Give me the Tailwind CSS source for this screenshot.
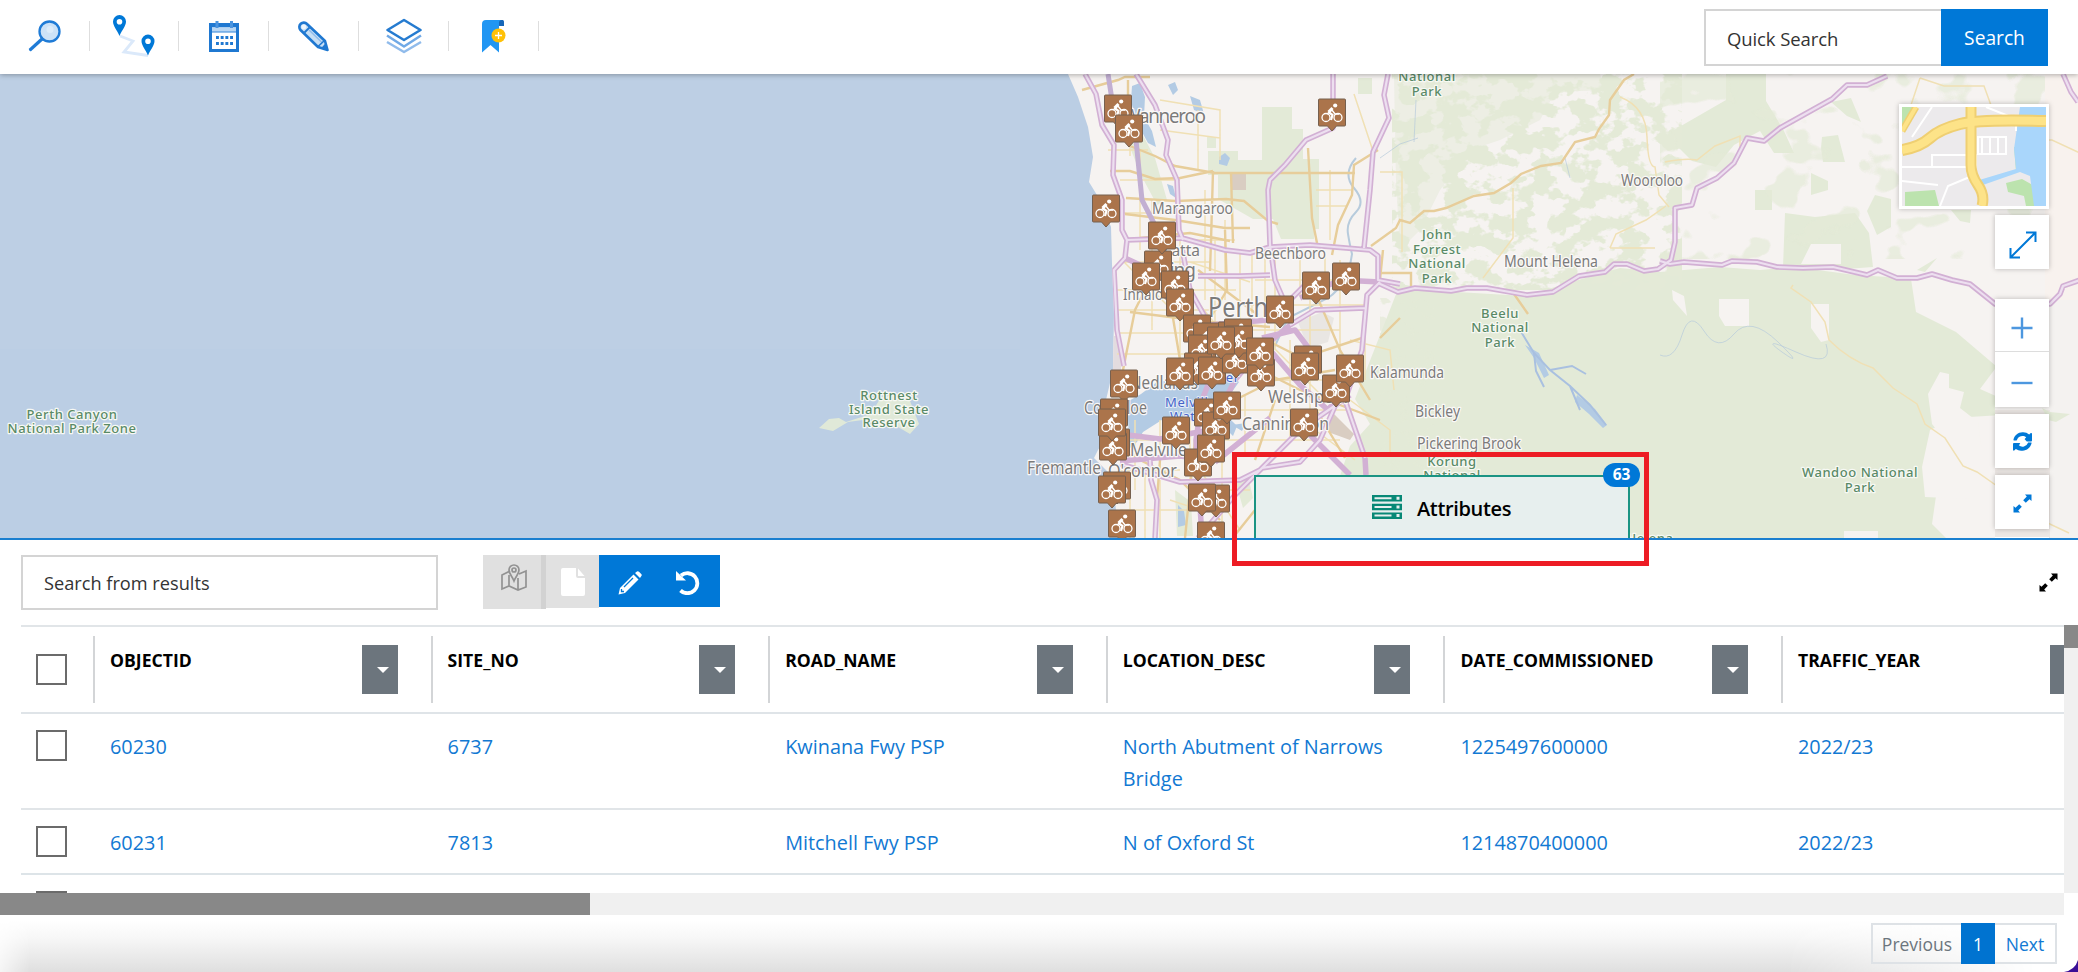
<!DOCTYPE html>
<html lang="en">
<head>
<meta charset="utf-8">
<title>Traffic Map</title>
<script src="https://cdn.jsdelivr.net/npm/@tailwindcss/browser@4"></script>
</head>
<body class="w-[2078px] h-[972px] overflow-hidden bg-white font-['Open_Sans','Noto_Sans',sans-serif] text-[#333] relative flex flex-col">

<header class="relative z-10 h-[74px] shrink-0 bg-white flex justify-between shadow-[0_1px_5px_rgba(0,0,0,0.3)]">
  <nav class="flex items-start pt-[21px]">
    <div class="w-[90px] h-[30px] border-r border-[#dedede] flex justify-center items-center">
      <svg class="w-8 h-8 overflow-visible" viewBox="0 0 32 32"><circle cx="20.500" cy="11.500" r="10" fill="#cce2f7" stroke="#1f7bd6" stroke-width="2.300"/><circle cx="21" cy="9.500" r="3.500" fill="#dcecfa"/><path d="M13 19 1.500 29.500" stroke="#1f7bd6" stroke-width="3.200" stroke-linecap="round"/></svg>
    </div>
    <div class="w-[89px] h-[30px] border-r border-[#dedede] flex justify-center items-center">
      <svg class="w-[42px] h-[42px] overflow-visible" viewBox="0 0 42 42"><path d="M7 21 20 26 11 37 35 40.500" fill="none" stroke="#dbe9fa" stroke-width="2.800"/><path id="pin" d="M6.500 0a6.500 6.500 0 0 1 6.500 6.500C13 11 9 15 6.500 21 4 15 0 11 0 6.500A6.500 6.500 0 0 1 6.500 0Zm0 4a2.800 2.800 0 1 0 0 5.600 2.800 2.800 0 0 0 0-5.600Z" fill="#0078d7"/><use href="#pin" x="28.500" y="19.500"/></svg>
    </div>
    <div class="w-[90px] h-[30px] border-r border-[#dedede] flex justify-center items-center">
      <svg class="w-[30px] h-[32px] overflow-visible" viewBox="0 0 30 32"><rect x="1.500" y="4.500" width="27" height="26" fill="#fff" stroke="#1f78d1" stroke-width="3"/><path d="M3 7h24v5H3z" fill="#b8d6f3"/><path d="M3 12h24" stroke="#4c95df" stroke-width="1.200"/><path d="M3 6h24" stroke="#1f78d1" stroke-width="2.200"/><path d="M8 1v7M22.500 1v7" stroke="#4a94df" stroke-width="3"/><path d="M7 17.500h17M7 23.500h17" stroke="#1f78d1" stroke-width="3.200" stroke-dasharray="2.900 1.800"/></svg>
    </div>
    <div class="w-[90px] h-[30px] border-r border-[#dedede] flex justify-center items-center">
      <svg class="w-[31px] h-[30px] overflow-visible" viewBox="0 0 31 30"><path d="M9 3 27 20 29.500 29 20 26 2.500 9A4.300 4.300 0 0 1 9 3Z" fill="#c7dff5" stroke="#1f78d1" stroke-width="2.600" stroke-linejoin="round"/><path d="m6.500 11.500 5-5" stroke="#1f78d1" stroke-width="1.800"/><circle cx="5.800" cy="6" r="2.400" fill="#eef6fd"/><path d="m11 9 13 12.500" stroke="#8fbcec" stroke-width="1.500"/><path d="M27.300 22.500 30 29.500l-7-2.300z" fill="#1f78d1"/><path d="m20 25.500 6.500-6" stroke="#1f78d1" stroke-width="1.600"/></svg>
    </div>
    <div class="w-[90px] h-[30px] border-r border-[#dedede] flex justify-center items-center">
      <svg class="w-[36px] h-[34px] overflow-visible" viewBox="0 0 36 34" fill="none" stroke-width="2.500" stroke-linejoin="round"><path d="M1 23 18 33 35 23" stroke="#90bbeb"/><path d="M1 16.500 18 27.500 35 16.500" stroke="#70a9e6"/><path d="M18 1 34.500 11 18 21 1.500 11Z" fill="#fff" stroke="#257bd0" stroke-width="2.600"/></svg>
    </div>
    <div class="w-[90px] h-[30px] border-r border-[#dedede] flex justify-center items-center">
      <svg class="w-[24px] h-[33px] overflow-visible" viewBox="0 0 24 33"><path d="M17 0h4a2.500 2.500 0 0 1 1 2.500V6h-5z" fill="#1666b8"/><path d="M0 32.500V4a4 4 0 0 1 4-4h16a3 3 0 0 0-3 3v29.500L8.500 25Z" fill="#2196f3"/><circle cx="16.500" cy="15.500" r="7" fill="#ffc107"/><path d="M16.500 12v7M13 15.500h7" stroke="#fff" stroke-width="1.300"/></svg>
    </div>
  </nav>
  <div class="flex mt-[9px] mr-[30px] h-[57px]">
    <div class="w-[237px] border-2 border-r-0 border-[#d4d4d4] flex items-center pl-[21px] pt-[2px] text-[18.500px] tracking-[-0.100px]">Quick Search</div>
    <div class="w-[107px] bg-[#0078d7] text-white flex items-center justify-center text-[19.200px] pt-[2px]">Search</div>
  </div>
</header>

<section class="relative h-[464px] shrink-0 overflow-hidden bg-[#bdcfe4]">
  <svg class="block w-[2078px] h-[464px]" viewBox="0 74 2078 464">
    <defs>
      <filter id="bush" x="0" y="0" width="1" height="1" color-interpolation-filters="sRGB"><feTurbulence type="fractalNoise" baseFrequency="0.045 0.060" numOctaves="4" seed="8"/><feColorMatrix values="0 0 0 0 0.894  0 0 0 0 0.918  0 0 0 0 0.843  14 0 0 0 -6.500"/></filter>
      <filter id="bush2" x="0" y="0" width="1" height="1" color-interpolation-filters="sRGB"><feTurbulence type="fractalNoise" baseFrequency="0.022 0.028" numOctaves="3" seed="21"/><feColorMatrix values="0 0 0 0 0.894  0 0 0 0 0.918  0 0 0 0 0.843  18 0 0 0 -10.500"/></filter>
      <clipPath id="land"><path d="M1068 74 1078 97 1088 127 1093 157 1089 182 1100 200 1111 227 1112 264 1114 314 1113 370 1106 400 1104 440 1098 450 1094 458 1102 466 1112 476 1116 510 1118 538H2078V74Z"/></clipPath>
      <g id="bike">
        <path d="M-12.500 0h25q1 0 1 1v25q0 1-1 1H4.500L0 32-4.500 27h-8q-1 0-1-1V1q0-1 1-1Z" fill="#ab744b" stroke="#76604f" stroke-width="1"/>
        <g fill="none" stroke="#fff" stroke-width="1.300"><circle cx="-6" cy="18.500" r="4"/><circle cx="6" cy="18.500" r="4"/><path d="m-5 15 5-4 3 4h4" stroke-width="1.500"/><path d="m-3.500 13 4 3-1.500 5" stroke-width="2.200"/><path d="m-3.500 13 4-4" stroke-width="3"/></g><circle cx="3.200" cy="6.500" r="2.100" fill="#fff"/>
      </g>
    </defs>
    <path d="M0 349h1113v189H0zM1020 74h93v276h-93z" fill="#b9cde3" opacity=".25"/>
    <path d="m819 428 10-9 10-1 7 4 25-8 10-17 22-4 7 8 9 23-9 10-12-7-28-8-22 3-15 9Z" fill="#e0e9d8"/>
    <g clip-path="url(#land)">
      <path d="M1060 74h1018v464H1060z" fill="#f6f3f1"/>
      <path d="M2045 74h33v274h-33z" fill="#f8f2ee"/>
      <g fill="#e3ead7">
        <path d="M1262 107h30v22h11v30h16v70h-5v10h-33l-8-20h-20l-35-20v-24h-10v-24h30v9h24zM1358 78h14v16h-14zM1207 137h9v11h-9zM1127 110l12 18 16 30 12 42-10 5-16-30-16-40z"/>
        <path d="M1394 74 1600 74 1605 90 1555 92 1540 120 1500 140 1470 150 1440 190 1420 230 1400 250 1396 180Z" opacity=".5"/>
        <path d="m1400 284 40 7 85 5 60-18 35-10 40 4 60-5 40 3 35-3 60 8 50 3 30 12 25 14 7 19 18 24 13 18-18 24 18 8 4 18-33 2-20 15 4 25-15 25-6 42 14 14 40 3 100 10v63h-760l8-70 16-32-10-36 10-30 20-22-15-25Z"/>
        <path d="m1674 130 52-30 0-26 40 0v27l18 30 10 22-20 0-14-22-26 14-18 22-24-6-16-16ZM1831 102l20-4 10 24-14-6zM1822 137l16-2 7 27h-22l-2-14zM1811 173l17 8v9l-17 5zM1755 190h17v20h-17zM1785 213l30 4 40-4 14 20 4 34-40 3-50-2zM1875 195l16 4 0 28-14 8-10-24zM1951 210h20l-1 13-10-2zM1917 270l20-12-12 14z"/>
        <path d="m1235 480 14 0 4 18-10 10zM1175 490l16 12 2 34h-16z"/>
      </g>
      <rect x="1392" y="74" width="290" height="216" filter="url(#bush)"/>
      <rect x="1660" y="74" width="385" height="185" filter="url(#bush2)" opacity=".7"/>
      <rect x="1380" y="298" width="55" height="240" filter="url(#bush)" opacity=".7"/>
      <g fill="#f6f3f1">
        <path d="M1719 299h30v27h-24l-6-10zM1811 304h18v36l-8 2-10-14zM1672 290l12 6 3 20-14-16zM1910 272l26 8 36 10 24 16v60l-40-34-40-20zM1940 372l9 2 0 14 15 4-4 16 18 14 4 30-10 22-40-50-4-30zM1930 430l20-10 45 40v36h-20l-5 3-45-2-3-30zM1844 531h34v7h-34zM1811 244h30v20h-40z"/>
      </g>
      <path d="M1995 300h83v238h-83z" fill="#f4f2f0"/>
      <path d="M1995 410h55v128h-55z" fill="#ece7e4"/>
      <path d="m2042 408 8 4 20 2-14 8-8-2z" fill="#e3ead7"/>
      <path d="M1110 336h11v34h-10z" fill="#e3dcdf"/>
      <path d="m1330 410 24 24-4 6-22-8zM1232 173h14v17h-14z" fill="#d9cdc2"/>
      <path d="m1298 322 24-10 12 6-6 24-20 6z" fill="#e9e6e3"/>
      <g fill="#b3cbe4">
        <path d="m1132 86 8-3 5 14-1 20 8 14 4 16-8-4-12-22-5-20ZM1168 85l7-3 3 8-5 5zM1190 96l10 4 4 14-10-4zM1219 157l6-4 5 5-3 8-8-2zM1167 184l6 2 3 12-6-4z"/>
        <path d="m1127 402 14-8 16-12 14-2 30 4 30-8 8 6-10 14-12 10 20 20-4 10-12-12-10 10-8-22-20 14-18-8-22 14-6 10-14 12-4-3 10-14zM1178 505l6 6 2 14-8 2zM1232 425l14-2-4 8zM1525 345l14 8 10 22-5 3-10-20zM1577 395l18 14 12 16-4 3-14-14-14-12z"/>
      </g>
      <g fill="none" stroke="#b7cbdc" stroke-width="2">
        <path d="M1356 158q-14 16-2 30t2 24-8 22 4 20q-4 30-24 44l-40 20-14 30-22 28"/>
        <path d="M1520 330 1534 353 1550 370 1570 386 1590 405 1606 425M1534 353l2 18 8 16M1550 370l22-4 14 8M1570 386l10 24" stroke="#a9c0e0"/>
        <path d="M1660 355q14 6 22-20t22-4 30 3 44 8 4 10 14 0 30-8M1380 158l20-14 18-6M1416 100l-2 42M1565 158l5 20" stroke-width="1" opacity=".7"/>
      </g>
      <!-- minor streets -->
      <g fill="none" stroke="#f0e0b4" stroke-width="1.500">
        <path d="M1108 150h40M1120 180h60M1113 213h100M1125 240h110M1120 262h90M1116 290h120M1117 310h100M1117 333h90M1117 354h70M1130 96v60M1140 150v100M1152 200v130M1180 220v140M1198 110v60M1205 190v110M1215 240v90M1225 220v80M1240 250v80M1160 100l60 10 0 50M1160 130l60 8M1122 260l60 60M1180 280l40 50M1252 250v110M1265 255v120M1190 262l60 20M1255 280h90M1245 305h120M1250 330h90M1266 340l60 60M1262 380h80M1275 260v90M1290 340v100M1310 300v120M1220 440h120M1230 410h120M1245 396v60M1330 170v70M1316 190h36M1316 206h30M1354 94l20 60M1380 172h22v80M1340 260v120M1300 255v40M1325 255v30"/>
        <path d="M1120 470h60M1130 490v48M1145 470v68M1120 510h80M1160 480v58M1170 500l30 10M1222 440v98M1200 470l40 60M1230 490h20M1315 430l40 30M1350 400l40 30v25M1350 340l40 10 4 40M1365 300v80M1128 440h60M1135 420v70M1160 420v50M1190 420v60"/>
        <path d="M1620 97q26 10 27 40t8 30l4 28 10 12M1665 162q20-4 32-2l18-14 25-10 0 20M1513 188v50l-30 40M1610 248h45M1610 248l6-14 30-14 20-14M1793 285l-2 3 20 14 14 20 4 18q20 20 44 28l20 20 24 16 8 20 20 14 18 28 14 6 20 14 5 5 15-6 12 14 10 20 30 14M1920 78l-10 30M1920 78l24 8 40 0 8 22 30 32 30 0 30 14 26 8"/>
      </g>
      <!-- arterial roads -->
      <g fill="none" stroke="#e7cd9a" stroke-width="2.400">
        <path d="M1082 90 1118 80 1125 77H1150M1128 80V110M1110 171h20l25 8 25-1 33-7M1130 146l25 10 20 10 40 7h140M1126 198l50 3 50-2 18 2 24 20 10 3M1213 171l-2 70-1 30M1231 173l2 70M1308 148l4 70 6 30M1378 150l-24 15-2 30-14 30-6 30M1125 214l50 6 50 8h25M1140 238l50-5 40 8M1225 230l2 60-30 50M1258 315l-60-45M1130 312l80 10 60 5M1155 270l-20 40-12 60M1180 360l-10-60M1240 360l60 30 80 30M1262 338l40 20 60-20M1310 280l30 70 30 50M1235 400l40-20 60-10M1275 400l-20 60M1345 458l-30-50M1120 450l60 30 40 40M1160 460l-6 78M1195 440l-10 98M1235 535l20-25M1380 338l20-20M1383 250l-3 30"/>
        <path d="M1634 74l-10 6-14 20-1 15-10 14-4 8-20 5-14 21-20 3-20 8-10 9-17 10-20 3-28 12-12 3-10 0-14 12-10-3-4 8-25 18M1380 273h31v14M1514 294l14 20" />
      </g>
      <!-- highways -->
      <g fill="none" stroke="#d2b0d4" stroke-width="5.500" stroke-linejoin="round">
        <path d="M1085 74 1096 94 1102 125 1114 145 1113 175 1122 200 1122 230 1127 240 1125 258 1114 270 1117 330 1124 366M1136 74 1155 105 1168 140 1166 155 1177 180 1179 230 1183 240M1182 248 1190 290 1204 315 1214 370 1202 400 1196 440 1202 538M1127 240 1182 238 1225 250 1250 253 1270 247 1310 245 1370 250 1378 256 1378 280 1400 284M1125 258 1140 265M1333 74V128L1306 140 1285 165 1270 180 1268 190 1270 245 1275 280 1288 310M1388 74 1384 95 1389 118 1373 152 1370 190 1364 248M1198 276 1240 276 1270 275M1380 282 1367 295 1362 350 1345 400 1365 458M1120 434 1160 439 1210 430 1235 380 1260 350 1290 325 1315 310 1365 308M1120 461 1180 456 1215 460M1150 460 1151 480 1157 500 1155 538M1120 464 1180 482 1240 480 1260 470 1300 430 1350 395M1198 538 1235 495 1262 468 1300 462 1320 440 1340 395 1328 410 1300 385 1270 350M1262 338 1295 330 1310 350M1310 280 1290 300 1268 320 1210 325M1380 282 1340 280 1300 298M1365 458 1366 475M1310 435 1350 475M1270 418 1215 462M1120 510 1122 538"/>
        <path d="m1378 283 20 9 17-4 36 3 16-3 20 0 40 7 26-3 26-16 26-4 9-8 13 0 17 7 14-2 13-9 4-18 0-34 17-3 5-17 20-10 17-15 13-25 17 3 16-13 52-29 15-14h20l20-9M1660 261l10 3 14-2 38 3 10-4 25 1 20 5 26 1 30-1 34 8 11-5 19 8h20l15-4 20 6 18 4 25 20h55l10-10 3-8 20-7M2063 74l8 18 7 10"/>
      </g>
      <g fill="none" stroke="#eddff0" stroke-width="2.200" stroke-linejoin="round">
        <path d="M1085 74 1096 94 1102 125 1114 145 1113 175 1122 200 1122 230 1127 240 1125 258 1114 270 1117 330 1124 366M1136 74 1155 105 1168 140 1166 155 1177 180 1179 230 1183 240M1127 240 1182 238 1225 250 1250 253 1270 247 1310 245 1370 250 1378 256 1378 280 1400 284M1333 74V128L1306 140 1285 165 1270 180 1268 190 1270 245 1275 280 1288 310M1388 74 1384 95 1389 118 1373 152 1370 190 1364 248M1198 276 1240 276 1270 275M1380 282 1367 295 1362 350 1345 400 1365 458M1290 325 1315 310 1365 308M1150 460 1151 480 1157 500 1155 538M1120 464 1180 482 1240 480 1260 470 1300 430 1350 395M1198 538 1235 495 1262 468 1300 462 1320 440 1340 395M1310 280 1290 300 1268 320M1182 248 1190 290 1204 315"/>
        <path d="m1378 283 20 9 17-4 36 3 16-3 20 0 40 7 26-3 26-16 26-4 9-8 13 0 17 7 14-2 13-9 4-18 0-34 17-3 5-17 20-10 17-15 13-25 17 3 16-13 52-29 15-14h20l20-9M1660 261l10 3 14-2 38 3 10-4 25 1 20 5 26 1 30-1 34 8 11-5 19 8h20l15-4 20 6 18 4 25 20h55l10-10 3-8 20-7M2063 74l8 18 7 10"/>
      </g>
      <path d="M1108 74 1112 100 1136 140 1142 200 1160 235" fill="none" stroke="#c2afd2" stroke-width="5"/>
    </g>

    <g font-family="Noto Sans" fill="#7b7b7b" stroke="#fbf9f8" stroke-width="2.500" stroke-linejoin="round" paint-order="stroke">
      <g font-size="15.500">
        <text x="1152" y="214" textLength="81" lengthAdjust="spacingAndGlyphs">Marangaroo</text>
        <text x="1255" y="259" textLength="71" lengthAdjust="spacingAndGlyphs">Beechboro</text>
        <text x="1164" y="256" textLength="36" lengthAdjust="spacingAndGlyphs">catta</text>
        <text x="1123" y="300" textLength="48" lengthAdjust="spacingAndGlyphs">Innaloo</text>
        <text x="1621" y="186" textLength="62" lengthAdjust="spacingAndGlyphs">Wooroloo</text>
        <text x="1504" y="267" textLength="94" lengthAdjust="spacingAndGlyphs">Mount Helena</text>
        <text x="1370" y="378" textLength="74" lengthAdjust="spacingAndGlyphs">Kalamunda</text>
        <text x="1415" y="417" textLength="45" lengthAdjust="spacingAndGlyphs">Bickley</text>
        <text x="1417" y="449" textLength="104" lengthAdjust="spacingAndGlyphs">Pickering Brook</text>
      </g>
      <g font-size="17.500">
        <text x="1130" y="389" textLength="68" lengthAdjust="spacingAndGlyphs">Nedlands</text>
        <text x="1084" y="414" textLength="63" lengthAdjust="spacingAndGlyphs">Cottesloe</text>
        <text x="1130" y="456" textLength="57" lengthAdjust="spacingAndGlyphs">Melville</text>
        <text x="1027" y="474" textLength="74" lengthAdjust="spacingAndGlyphs">Fremantle</text>
        <text x="1108" y="477" textLength="69" lengthAdjust="spacingAndGlyphs">O'connor</text>
        <text x="1268" y="403" textLength="80" lengthAdjust="spacingAndGlyphs">Welshpool</text>
        <text x="1242" y="430" textLength="87" lengthAdjust="spacingAndGlyphs">Cannington</text>
      </g>
      <text x="1123" y="123" font-size="19" textLength="83">Wanneroo</text>
      <text x="1140" y="277" font-size="19" textLength="56">Stirling</text>
      <text x="1208" y="317" font-size="27" textLength="60" lengthAdjust="spacingAndGlyphs">Perth</text>
    </g>
    <g font-family="Noto Sans" font-size="13" fill="#5a8a67" stroke="#f7f9f4" stroke-width="2.500" stroke-linejoin="round" paint-order="stroke" text-anchor="middle" letter-spacing=".55" font-weight="500">
      <text x="1427" y="81">National</text><text x="1427" y="96">Park</text>
      <text x="1437" y="239">John</text><text x="1437" y="254">Forrest</text><text x="1437" y="268">National</text><text x="1437" y="283">Park</text>
      <text x="1500" y="318">Beelu</text><text x="1500" y="332">National</text><text x="1500" y="347">Park</text>
      <text x="1860" y="477">Wandoo National</text><text x="1860" y="492">Park</text>
      <text x="1452" y="466">Korung</text><text x="1452" y="480">National</text>
      <text x="1650" y="543">Helena</text>
      <text x="889" y="400">Rottnest</text><text x="889" y="414">Island State</text><text x="889" y="427">Reserve</text>
      <text x="72" y="419">Perth Canyon</text><text x="72" y="433">National Park Zone</text>
    </g>
    <g font-family="Noto Sans" font-size="13" fill="#4664c8" stroke="#e3ecf7" stroke-width="2" paint-order="stroke" letter-spacing=".6"><text x="1165" y="407">Melville</text><text x="1170" y="421">Water</text><text x="1206" y="382">River</text></g>

    <g>
      <use href="#bike" x="1118" y="95"/><use href="#bike" x="1129" y="115"/><use href="#bike" x="1332" y="99"/><use href="#bike" x="1106" y="195"/><use href="#bike" x="1158" y="251"/><use href="#bike" x="1162" y="222"/><use href="#bike" x="1146" y="263"/><use href="#bike" x="1175" y="271"/><use href="#bike" x="1180" y="289"/><use href="#bike" x="1280" y="296"/><use href="#bike" x="1316" y="272"/><use href="#bike" x="1346" y="263"/>
      <use href="#bike" x="1197" y="315"/><use href="#bike" x="1207" y="323"/><use href="#bike" x="1232" y="322"/><use href="#bike" x="1238" y="319"/><use href="#bike" x="1202" y="335"/><use href="#bike" x="1198" y="353"/><use href="#bike" x="1212" y="357"/><use href="#bike" x="1236" y="346"/><use href="#bike" x="1239" y="326"/><use href="#bike" x="1221" y="327"/><use href="#bike" x="1261" y="359"/><use href="#bike" x="1260" y="338"/><use href="#bike" x="1180" y="358"/>
      <use href="#bike" x="1308" y="346"/><use href="#bike" x="1305" y="353"/><use href="#bike" x="1336" y="375"/><use href="#bike" x="1350" y="355"/><use href="#bike" x="1304" y="409"/><use href="#bike" x="1208" y="399"/><use href="#bike" x="1216" y="412"/><use href="#bike" x="1227" y="392"/><use href="#bike" x="1176" y="417"/><use href="#bike" x="1198" y="449"/><use href="#bike" x="1211" y="435"/>
      <use href="#bike" x="1124" y="370"/><use href="#bike" x="1114" y="399"/><use href="#bike" x="1116" y="429"/><use href="#bike" x="1113" y="433"/><use href="#bike" x="1112" y="409"/><use href="#bike" x="1117" y="472"/><use href="#bike" x="1112" y="476"/><use href="#bike" x="1122" y="510"/><use href="#bike" x="1216" y="485"/><use href="#bike" x="1202" y="484"/><use href="#bike" x="1211" y="522"/>
    </g>
  </svg>

  <!-- basemap switch and map controls -->
  <div class="absolute top-[30px] right-[29px] flex flex-col items-end">
    <div class="w-[150px] h-[105px] bg-white p-[3px] shadow-[0_0_5px_rgba(0,0,0,0.25)]">
      <svg class="block w-full h-full" viewBox="0 0 144 99">
        <rect width="144" height="99" fill="#eceaec"/>
        <path d="M0 0h12L0 22zM112 40l12 2 6 18-16 4zM104 76l16-4 14 8-2 19h-8l-2-10-16-4zM3 85l30-2 4 16H3z" fill="#bce3ae"/>
        <path d="M118 0h26v99h-12l-4-30-10-4-40 14-4-5 40-12-2-20z" fill="#a9d6fb"/>
        <path d="M30 48h44v12H30zM76 30h28v17H76zM0 60h30M0 74l36 4M10 30l20-30M84 0l30 12v12" fill="none" stroke="#fff" stroke-width="2"/>
        <path d="m38 99 8-20 24-10M80 30v16M88 30v16M96 30v16" fill="none" stroke="#fff" stroke-width="2"/>
        <g fill="none" stroke="#efcf72"><path d="M0 24 14 0" stroke-width="7"/><path d="M0 43q18-3 28-12t30-14 86-3" stroke-width="12"/><path d="M69 0v58q0 10 7 20t4 21" stroke-width="11"/></g>
        <g fill="none" stroke="#fde388"><path d="M0 24 14 0" stroke-width="4"/><path d="M0 43q18-3 28-12t30-14 86-3" stroke-width="8"/><path d="M69 0v58q0 10 7 20t4 21" stroke-width="7"/></g>
      </svg>
    </div>
    <div class="mt-[6px] w-[54px] h-[54px] bg-white shadow-[0_0_5px_rgba(0,0,0,0.25)] flex items-center justify-center pt-[5px] pl-px">
      <svg class="w-[28px] h-[28px]" viewBox="0 0 28 28" fill="none" stroke="#0078d7" stroke-width="2"><path d="M2 26 26 2M17 1.500h9.500V11M1.500 17v9.500H11"/></svg>
    </div>
    <div class="mt-[30px] w-[54px] h-[108px] bg-white shadow-[0_0_5px_rgba(0,0,0,0.25)] flex flex-col">
      <div class="h-[53px] border-b border-[#ddd] flex items-center justify-center pt-[6px]"><svg class="w-[22px] h-[22px]" viewBox="0 0 22 22" stroke="#4d97df" stroke-width="2.400"><path d="M0.500 11h21M11 .5v21"/></svg></div>
      <div class="h-[55px] flex items-center justify-center pt-[6px]"><svg class="w-[22px] h-[22px]" viewBox="0 0 22 22" stroke="#4d97df" stroke-width="2.400"><path d="M.5 11h21"/></svg></div>
    </div>
    <div class="mt-[7px] w-[54px] h-[54px] bg-white shadow-[0_0_5px_rgba(0,0,0,0.25)] flex items-center justify-center pt-px">
      <svg class="w-[19px] h-[19px]" viewBox="0 0 512 512" fill="#0078d7"><path d="M371 256h117a24 24 0 0 0 24-24V50c0-21-26-32-41-17l-35 35A247 247 0 0 0 256 8C134 8 34 96 12 212c-1 7 4 14 12 14h70c6 0 10-4 12-9a153 153 0 0 1 250-70l-32 31c-15 15-4 41 17 41zM24 296a24 24 0 0 0-24 24v158c0 21 26 32 41 17l35-35a247 247 0 0 0 180 44c122-8 214-88 244-204 1-8-4-14-12-14h-75c-6 0-10 4-12 9a153 153 0 0 1-245 62l31-31c15-15 4-30-17-30z"/></svg>
    </div>
    <div class="mt-[7px] w-[54px] h-[54px] bg-white shadow-[0_0_5px_rgba(0,0,0,0.25)] flex items-center justify-center pt-[2px]">
      <svg class="w-[19px] h-[19px]" viewBox="0 0 19 19" fill="#0078d7"><path d="M12 .5h6.500V7l-2-1.800-3.700 3.600-2.600-2.600L13.800 2.500zM.5 12l2 1.800 3.700-3.600 2.600 2.600-3.600 3.700 1.800 2H.5z"/></svg>
    </div>
    <div class="mt-[8px] w-[54px] h-[20px] bg-white"></div>
  </div>

  <div class="absolute left-[1254px] top-[401px] w-[376px] h-[64px] bg-[#e7efee] border-2 border-b-0 border-[#1b9483] flex items-center pl-[116px] gap-[15px] pb-[2px]">
    <svg class="w-[30px] h-[24px]" viewBox="0 0 30 24"><path d="M0 0h30v6.500H0zM0 8.700h30v6.500H0zM0 17.400h30v6.500H0z" fill="#078876"/><path d="M2.500 3.300h17M2.500 12h17M2.500 20.600h17" stroke="#e7efee" stroke-width="2"/><path d="M24.500 3.300h3M24.500 12h3M24.500 20.600h3" stroke="#e7efee" stroke-width="3"/></svg>
    <span class="text-[20px] font-semibold text-black tracking-[-0.350px] pt-[3px]">Attributes</span>
    <span class="absolute -top-[14px] -right-[12px] w-[37px] h-[24px] rounded-full bg-[#0078d7] text-white text-[15.500px] font-bold flex items-center justify-center">63</span>
  </div>
</section>

<main class="relative h-[434px] shrink-0 border-t-2 border-[#1a7fcf] flex flex-col">
  <div class="h-[85px] shrink-0 flex items-start justify-between pt-[15px] pl-[21px] pr-[20px]">
    <div class="flex">
      <div class="w-[417px] h-[55px] border-2 border-[#d4d4d4] flex items-center pl-[21px] pt-[2px] text-[18.200px]">Search from results</div>
      <div class="ml-[45px] flex">
        <div class="w-[63px] h-[54px] bg-[#e0e0e0] border-r-[5px] border-[#d2d2d2] flex justify-center pt-[9px] pl-[4px]">
          <svg class="w-[26px] h-[28px]" viewBox="0 0 26 28" fill="none" stroke="#929292" stroke-width="1.700"><path d="M9 7 1 11v14l7-3 9 4 8-3V7l-7 3M8 11v11M17 14v12"/><path d="M13 1a5 5 0 0 1 5 5c0 4-3 6-5 11-2-5-5-7-5-11a5 5 0 0 1 5-5Z"/><circle cx="13" cy="6" r="2"/></svg>
        </div>
        <div class="w-[53px] h-[53px] bg-[#e1e1e1] flex justify-center pt-[13px]"><svg class="w-[24px] h-[28px]" viewBox="0 0 24 28"><path d="M2 0h13v8q0 2 2 2h7v16q0 2-2 2H2q-2 0-2-2V2q0-2 2-2Z" fill="#fff"/><path d="M17 .5 23.500 8H17z" fill="#fff"/></svg></div>
        <div class="w-[60px] h-[52px] bg-[#0078d7] flex items-center justify-center pt-[4px] pl-[2px]"><svg class="w-[24px] h-[24px]" viewBox="0 0 24 24"><path d="m15.500 3.500 5 5L7 22l-6.500 1.500L2 17Z" fill="#fff"/><path d="m17 2 2-1.500q1-.7 2 .3l2.200 2.200q1 1 .2 2L22 7z" fill="#fff"/><path d="m6 16 9-9M3.500 18v2.500H6" stroke="#0078d7" stroke-width="1.300" fill="none"/></svg></div>
        <div class="w-[61px] h-[52px] bg-[#0078d7] flex items-center justify-center pt-[3px] pr-[2px]"><svg class="w-[25px] h-[25px]" viewBox="0 0 25 25" fill="none"><path d="M5 5.500A10 10 0 1 1 4.500 20.500" stroke="#fff" stroke-width="3.800"/><path d="M0 1v9.500h10z" fill="#fff"/></svg></div>
      </div>
    </div>
    <svg class="w-[19px] h-[19px] mt-[18px]" viewBox="0 0 19 19" fill="#000"><path d="M12 .5h6.500V7l-2-1.800-3.700 3.600-2.600-2.600L13.800 2.500zM.5 12l2 1.800 3.700-3.600 2.600 2.600-3.600 3.700 1.800 2H.5z"/></svg>
  </div>

  <div class="flex h-[268px] shrink-0">
    <div class="w-[2064px] h-[268px] pl-[21px] overflow-hidden">
      <div class="w-[2130px] border-t-2 border-[#e1e5e8]">
        <div class="h-[87px] flex border-b-2 border-[#dfe4e8] pt-[9px] text-[17.600px] leading-[24px] font-bold text-black">
          <div class="w-[72px] shrink-0 pl-[15px] pt-[18px]"><div class="w-[31px] h-[31px] border-2 border-[#6b6b6b] bg-white"></div></div>
          <div class="w-[337.600px] shrink-0 h-[67px] border-l-2 border-[#d3d5d7] pl-[15px] pt-[12px] flex justify-between"><span>OBJECTID</span><div class="w-[36px] h-[49px] mr-[33px] mt-[-3px] bg-[#6c757d] flex items-center justify-center pl-[6px]"><svg class="w-3 h-[6px]" viewBox="0 0 12 6"><path d="M0 0h12L6 6z" fill="#fff"/></svg></div></div>
          <div class="w-[337.600px] shrink-0 h-[67px] border-l-2 border-[#d3d5d7] pl-[15px] pt-[12px] flex justify-between"><span>SITE_NO</span><div class="w-[36px] h-[49px] mr-[33px] mt-[-3px] bg-[#6c757d] flex items-center justify-center pl-[6px]"><svg class="w-3 h-[6px]" viewBox="0 0 12 6"><path d="M0 0h12L6 6z" fill="#fff"/></svg></div></div>
          <div class="w-[337.600px] shrink-0 h-[67px] border-l-2 border-[#d3d5d7] pl-[15px] pt-[12px] flex justify-between"><span>ROAD_NAME</span><div class="w-[36px] h-[49px] mr-[33px] mt-[-3px] bg-[#6c757d] flex items-center justify-center pl-[6px]"><svg class="w-3 h-[6px]" viewBox="0 0 12 6"><path d="M0 0h12L6 6z" fill="#fff"/></svg></div></div>
          <div class="w-[337.600px] shrink-0 h-[67px] border-l-2 border-[#d3d5d7] pl-[15px] pt-[12px] flex justify-between"><span>LOCATION_DESC</span><div class="w-[36px] h-[49px] mr-[33px] mt-[-3px] bg-[#6c757d] flex items-center justify-center pl-[6px]"><svg class="w-3 h-[6px]" viewBox="0 0 12 6"><path d="M0 0h12L6 6z" fill="#fff"/></svg></div></div>
          <div class="w-[337.600px] shrink-0 h-[67px] border-l-2 border-[#d3d5d7] pl-[15px] pt-[12px] flex justify-between"><span>DATE_COMMISSIONED</span><div class="w-[36px] h-[49px] mr-[33px] mt-[-3px] bg-[#6c757d] flex items-center justify-center pl-[6px]"><svg class="w-3 h-[6px]" viewBox="0 0 12 6"><path d="M0 0h12L6 6z" fill="#fff"/></svg></div></div>
          <div class="w-[337.600px] shrink-0 h-[67px] border-l-2 border-[#d3d5d7] pl-[15px] pt-[12px] flex justify-between"><span>TRAFFIC_YEAR</span><div class="w-[36px] h-[49px] mr-[33px] mt-[-3px] bg-[#6c757d]"></div></div>
        </div>
        <div class="h-[96px] flex border-b-2 border-[#e1e5e8] pt-[16px] text-[19.850px] leading-[32px] text-[#1279d3]">
          <div class="w-[89px] shrink-0 pl-[15px]"><div class="w-[31px] h-[31px] border-2 border-[#6b6b6b]"></div></div>
          <div class="w-[337.600px] shrink-0 pt-px">60230</div><div class="w-[337.600px] shrink-0 pt-px">6737</div><div class="w-[337.600px] shrink-0 pt-px">Kwinana Fwy PSP</div><div class="w-[337.600px] shrink-0 pt-px">North Abutment of Narrows<br>Bridge</div><div class="w-[337.600px] shrink-0 pt-px">1225497600000</div><div class="w-[337.600px] shrink-0 pt-px">2022/23</div>
        </div>
        <div class="h-[65px] flex border-b-2 border-[#dde4e8] pt-[16px] text-[19.850px] leading-[32px] text-[#1279d3]">
          <div class="w-[89px] shrink-0 pl-[15px]"><div class="w-[31px] h-[31px] border-2 border-[#6b6b6b]"></div></div>
          <div class="w-[337.600px] shrink-0 pt-px">60231</div><div class="w-[337.600px] shrink-0 pt-px">7813</div><div class="w-[337.600px] shrink-0 pt-px">Mitchell Fwy PSP</div><div class="w-[337.600px] shrink-0 pt-px">N of Oxford St</div><div class="w-[337.600px] shrink-0 pt-px">1214870400000</div><div class="w-[337.600px] shrink-0 pt-px">2022/23</div>
        </div>
        <div class="pl-[15px] pt-[16px]"><div class="w-[31px] h-[31px] border-2 border-[#6b6b6b] bg-[#ccc]"></div></div>
      </div>
    </div>
    <div class="w-[14px] h-[268px] bg-[#f0f0f0]"><div class="h-[23px] bg-[#888]"></div></div>
  </div>
  <div class="w-[2064px] h-[22px] shrink-0 bg-[#f0f0f0]"><div class="w-[590px] h-[22px] bg-[#888]"></div></div>

  <div class="relative flex-1 flex justify-end pr-[21px] pt-[8px]">
    <div class="absolute inset-0 bg-[linear-gradient(to_bottom,#ffffff_10%,#f7f7f7_40%,#dfdfdf_100%)] [mask-image:linear-gradient(to_right,rgba(0,0,0,0.3),black_30px,black_86%,transparent_98%)]"></div>
    <div class="relative h-[41px] w-[186px] flex border-2 border-[#dee2e6] text-[17.500px]">
      <div class="w-[88px] flex items-center justify-center text-[#6c757d] pt-[2px]">Previous</div>
      <div class="w-[34px] -my-[2px] bg-[#0073d0] text-white flex items-center justify-center pt-[2px]">1</div>
      <div class="flex-1 flex items-center justify-center text-[#1279d3] pt-[2px]">Next</div>
    </div>
    <svg class="absolute right-0 bottom-0 w-[14px] h-[12px]" viewBox="0 0 14 12"><path d="M14 0v12H0Q11 10 14 0Z" fill="#3a0f96"/></svg>
  </div>
</main>

<!-- highlight frame over the attributes tab -->
<div class="absolute z-20 left-[1232px] top-[452px] w-[417px] h-[114px] border-[5px] border-[#ed1c24]"></div>
</body>
</html>
